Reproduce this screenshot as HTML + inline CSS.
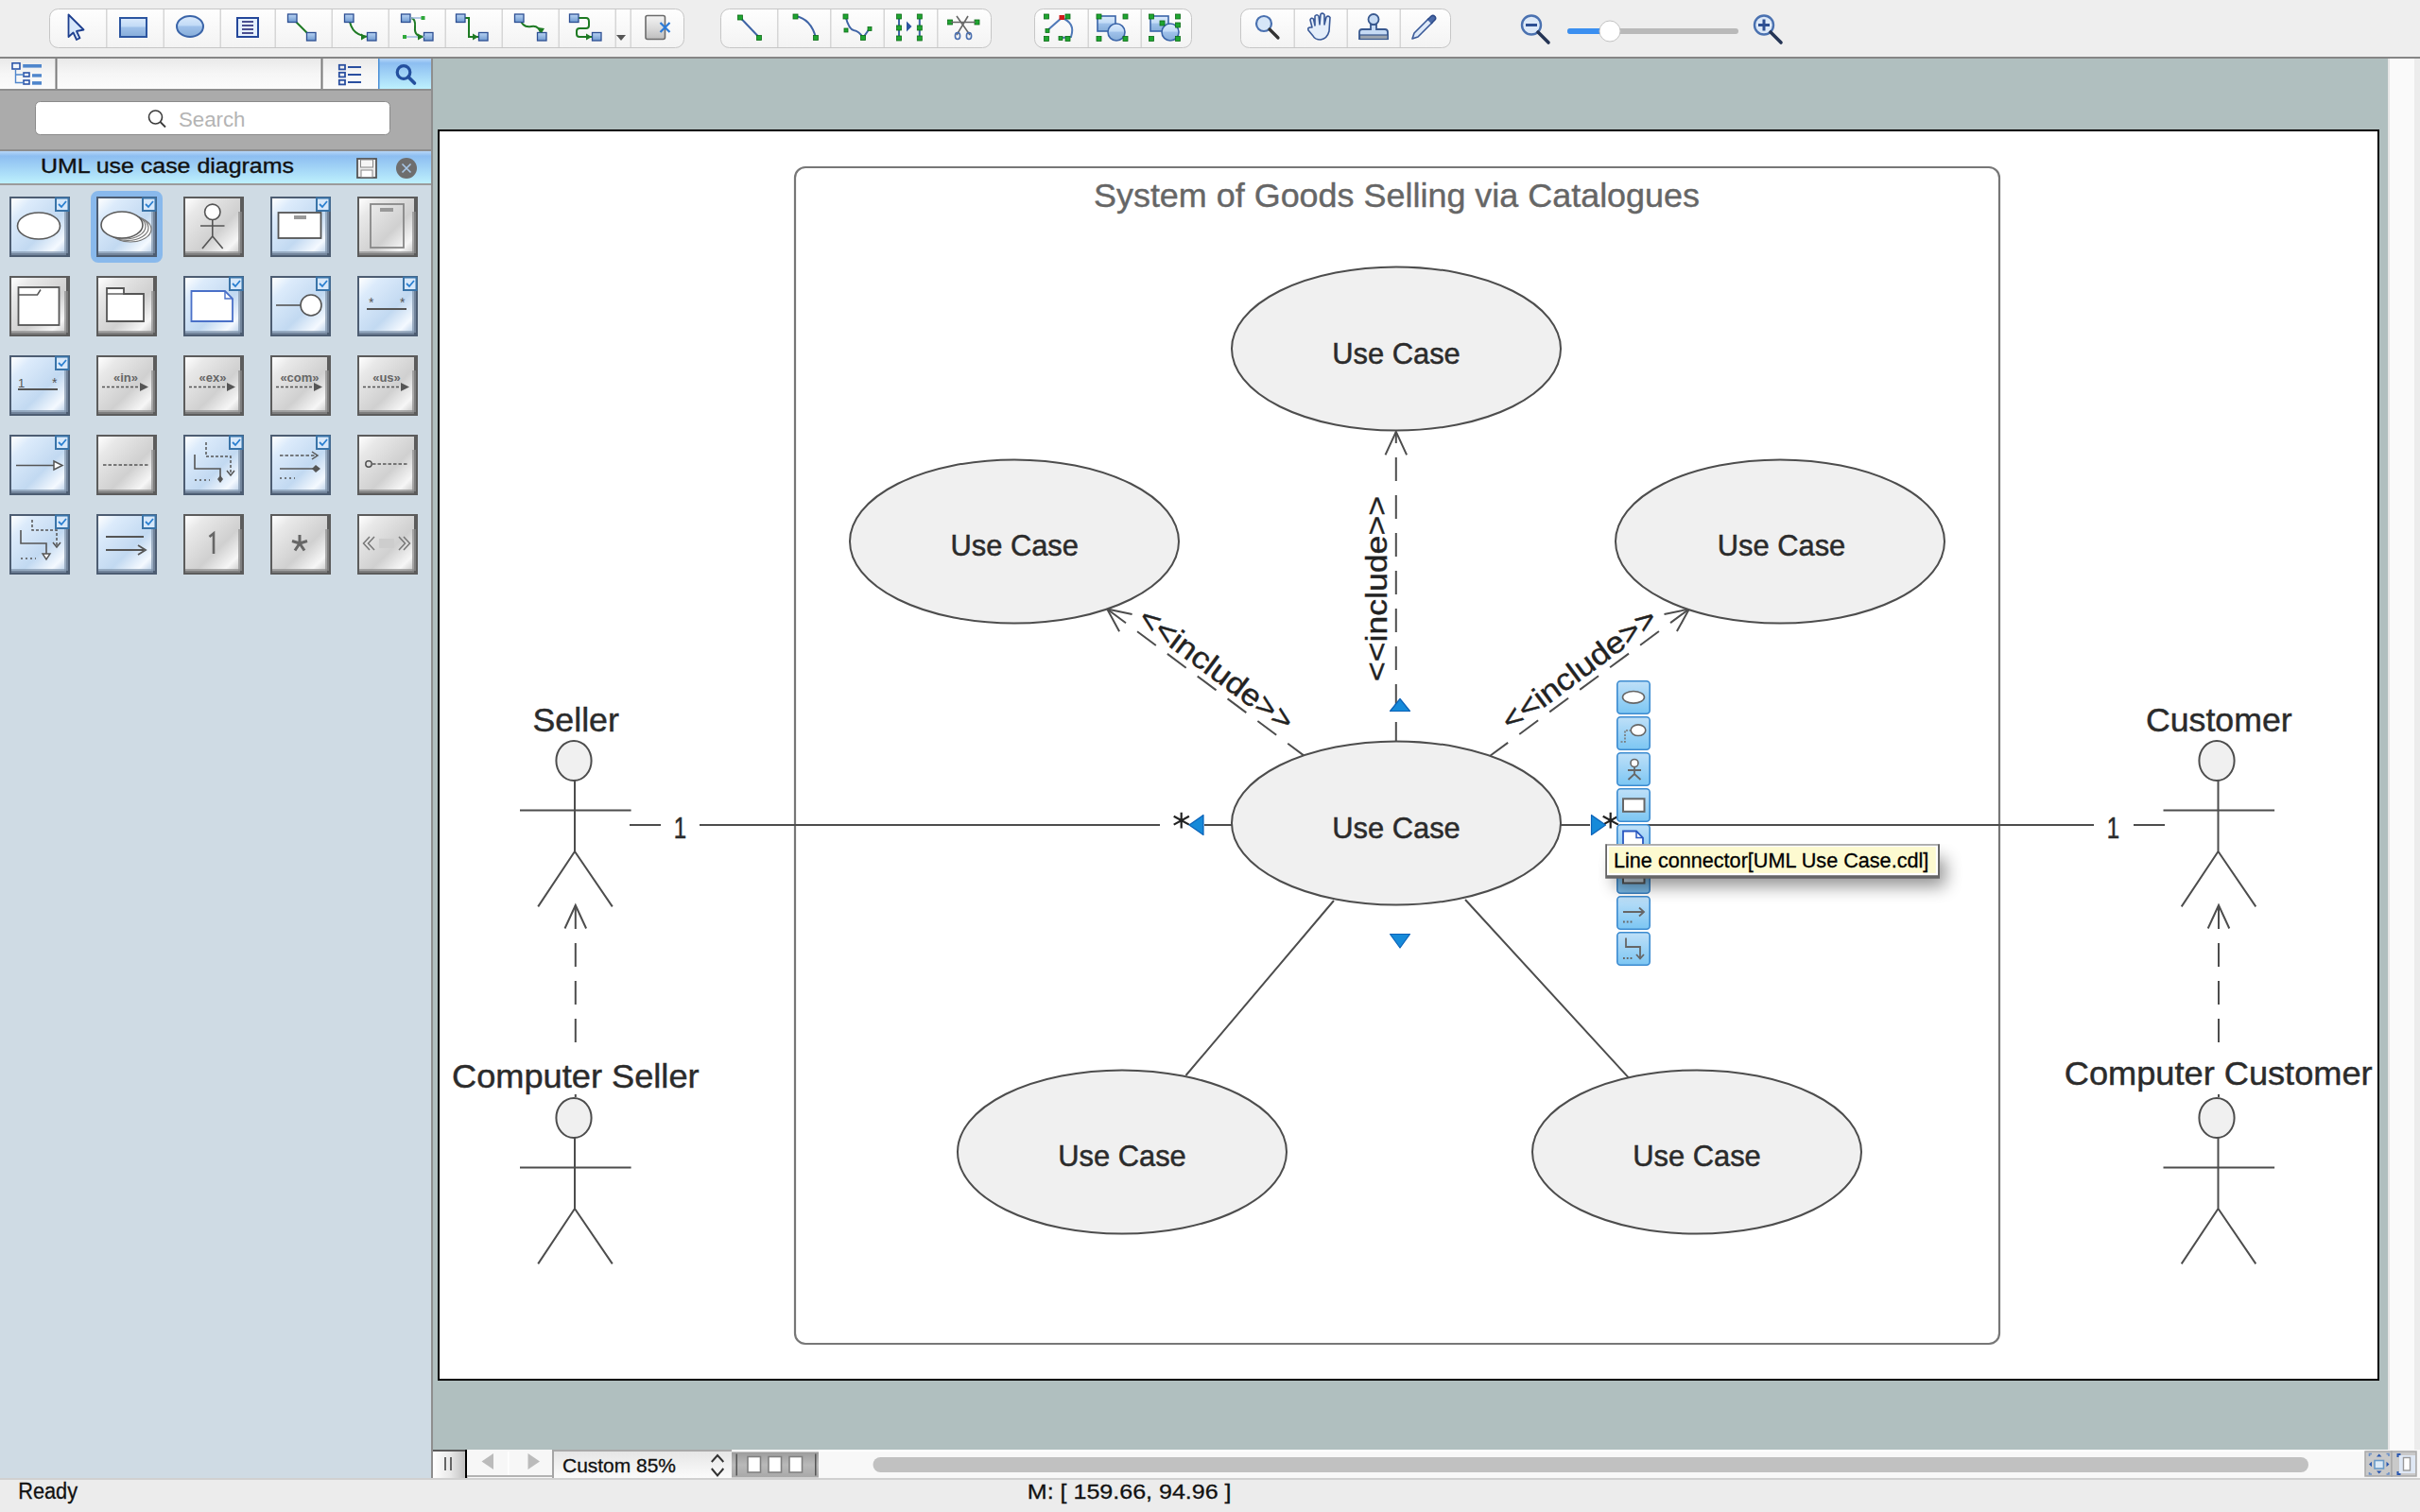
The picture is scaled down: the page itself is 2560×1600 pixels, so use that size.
<!DOCTYPE html>
<html><head><meta charset="utf-8">
<style>
*{margin:0;padding:0;box-sizing:border-box}
html,body{width:2560px;height:1600px;overflow:hidden;background:#ececec;font-family:"Liberation Sans",sans-serif}
.a{position:absolute}
svg{display:block}
</style></head>
<body>
<svg class="a" style="left:0;top:0" width="2560" height="62" viewBox="0 0 2560 62">
<defs>
<linearGradient id="gbtn" x1="0" y1="0" x2="0" y2="1"><stop offset="0" stop-color="#fefefe"/><stop offset="1" stop-color="#f3f3f3"/></linearGradient>
<linearGradient id="gblue" x1="0" y1="0" x2="0" y2="1"><stop offset="0" stop-color="#dbeafc"/><stop offset="0.45" stop-color="#c2dbf6"/><stop offset="0.5" stop-color="#9fc1ea"/><stop offset="1" stop-color="#86add9"/></linearGradient>
<linearGradient id="gsq" x1="0" y1="0" x2="0" y2="1"><stop offset="0" stop-color="#b9d3f3"/><stop offset="1" stop-color="#6f9ad0"/></linearGradient>
<linearGradient id="ggray" x1="0" y1="0" x2="0" y2="1"><stop offset="0" stop-color="#f4f4f4"/><stop offset="0.5" stop-color="#dcdcdc"/><stop offset="1" stop-color="#bdbdbd"/></linearGradient>
</defs>
<rect width="2560" height="60" fill="#eeeeee"/>
<rect y="60" width="2560" height="2" fill="#858585"/>
<g stroke="#c6c6c6" stroke-width="1" fill="url(#gbtn)">
<rect x="52.5" y="9.5" width="671" height="41" rx="9"/>
<rect x="762.5" y="9.5" width="286" height="41" rx="9"/>
<rect x="1094.5" y="9.5" width="166" height="41" rx="9"/>
<rect x="1312.5" y="9.5" width="222" height="41" rx="9"/>
</g>
<g fill="#d6d6d6">
<rect x="112" y="10" width="1.5" height="40"/><rect x="172.5" y="10" width="1.5" height="40"/><rect x="232.5" y="10" width="1.5" height="40"/><rect x="290.5" y="10" width="1.5" height="40"/><rect x="350.5" y="10" width="1.5" height="40"/><rect x="410.5" y="10" width="1.5" height="40"/><rect x="470.5" y="10" width="1.5" height="40"/><rect x="530.5" y="10" width="1.5" height="40"/><rect x="590.5" y="10" width="1.5" height="40"/><rect x="650.5" y="10" width="1.5" height="40"/><rect x="666.5" y="10" width="1.5" height="40"/>
<rect x="822" y="10" width="1.5" height="40"/><rect x="878" y="10" width="1.5" height="40"/><rect x="934.5" y="10" width="1.5" height="40"/><rect x="991" y="10" width="1.5" height="40"/>
<rect x="1150.5" y="10" width="1.5" height="40"/><rect x="1206.5" y="10" width="1.5" height="40"/>
<rect x="1368.5" y="10" width="1.5" height="40"/><rect x="1424.5" y="10" width="1.5" height="40"/><rect x="1480.5" y="10" width="1.5" height="40"/>
</g>
<!-- group1 icons -->
<path d="M72.5 15.5V39L77.5 34.5L81 42L84.5 40.3L81 33L88.5 31.5Z" fill="#d6e7fb" stroke="#1d3e8e" stroke-width="1.8" stroke-linejoin="round"/>
<rect x="127" y="19" width="28" height="20" fill="url(#gblue)" stroke="#2b55a0" stroke-width="2"/>
<ellipse cx="201" cy="28" rx="14" ry="11" fill="url(#gblue)" stroke="#3a64a8" stroke-width="2"/>
<rect x="251" y="19" width="22" height="20" fill="#e6f1fd" stroke="#24479a" stroke-width="2"/>
<path d="M256 23H268M256 27H268M256 31H268M256 35H268" stroke="#4a4f90" stroke-width="1.8"/>
<g stroke="#1e7a23" stroke-width="2" fill="none">
<path d="M309 19L329 39"/>
<path d="M369.5 19Q371 39 393 39"/>
<path d="M434 19Q440 19 439 29Q438 39 449 39"/>
<path d="M487 19H496V39H511"/>
<path d="M549.5 19Q553 30 562 28Q571 26 573 39"/>
<path d="M607.5 19H620Q623 19 623 23V27Q623 30 620 30H613Q610 30 610 33V36Q610 39 613 39H631"/>
</g>
<g fill="url(#gsq)" stroke="#2d4f93" stroke-width="1.3">
<rect x="304.5" y="15" width="9.5" height="8.5"/><rect x="324.5" y="34.5" width="9.5" height="8.5"/>
<rect x="364.5" y="15" width="9.5" height="8.5"/><rect x="388.5" y="34.5" width="9.5" height="8.5"/>
<rect x="424.5" y="15" width="9.5" height="8.5"/><rect x="448.5" y="34.5" width="9.5" height="8.5"/>
<rect x="482.5" y="15" width="9.5" height="8.5"/><rect x="506.5" y="34.5" width="9.5" height="8.5"/>
<rect x="544.5" y="15" width="9.5" height="8.5"/><rect x="568.5" y="34.5" width="9.5" height="8.5"/>
<rect x="602.5" y="15" width="9.5" height="8.5"/><rect x="626.5" y="34.5" width="9.5" height="8.5"/>
</g>
<path d="M434 19H447M428 39H449" stroke="#9db8dc" stroke-width="1.4"/><rect x="445.5" y="17" width="4" height="4" fill="#2fa83a"/><rect x="426" y="37" width="4" height="4" fill="#2fa83a"/>
<path d="M652 37H662L657 43Z" fill="#555"/>
<rect x="683" y="16.5" width="20.5" height="25" rx="2" fill="url(#ggray)" stroke="#6b6b6b" stroke-width="1.6"/>
<path d="M698.5 24L708.5 34M708.5 24L698.5 34" stroke="#2a7ad8" stroke-width="2.2"/>
<g fill="#1e7a23"><path d="M388 39L382 35.5V42.5Z"/><path d="M448 39L442 35.5V42.5Z"/><path d="M506 39L500 35.5V42.5Z"/><path d="M626 39L620 35.5V42.5Z"/><path d="M573 35L569 29L576 30Z"/></g>
<!-- group2 icons -->
<g stroke="#3f64a6" stroke-width="2" fill="none">
<path d="M783 18.5L803 39.5"/>
<path d="M841.5 17Q858 20 863 40"/>
<path d="M894.5 17.5Q898 31 903 32Q909 33 913 40M913 40L920 30"/>
<path d="M951 17V40M972.8 17V40"/>
</g>
<path d="M959 22.5L964.5 28L959 33.5Z" fill="#2c55a0"/>
<g fill="#1fa531" stroke="#0d6b17" stroke-width="0.8">
<rect x="780.5" y="16" width="5" height="5"/><rect x="800.5" y="37.5" width="5" height="5"/>
<rect x="839" y="15" width="5" height="5"/><rect x="860.5" y="37.5" width="5" height="5"/>
<rect x="892" y="15" width="5" height="5"/><rect x="910.5" y="37.5" width="5" height="5"/>
<rect x="893" y="30" width="4" height="4"/><rect x="918" y="28.5" width="4" height="4"/>
<rect x="948.5" y="15" width="5" height="5"/><rect x="948.5" y="27" width="5" height="5"/><rect x="948.5" y="38" width="5" height="5"/>
<rect x="970.3" y="15" width="5" height="5"/><rect x="970.3" y="27" width="5" height="5"/><rect x="970.3" y="38" width="5" height="5"/>
<rect x="1002.5" y="21" width="5" height="5"/><rect x="1031" y="21" width="5" height="5"/>
</g>
<path d="M1006 23.5H1032M1012 17L1026 37M1024 17L1012 37" stroke="#666" stroke-width="1.6" fill="none"/>
<ellipse cx="1013" cy="38" rx="2.6" ry="3.5" fill="none" stroke="#4a6fb0" stroke-width="1.6"/>
<ellipse cx="1025" cy="38" rx="2.6" ry="3.5" fill="none" stroke="#4a6fb0" stroke-width="1.6"/>
<!-- group3 -->
<path d="M1107 33L1123 19Q1138 24 1133 39L1124 40" fill="none" stroke="#4f79b8" stroke-width="2"/>
<rect x="1120.5" y="16" width="5.5" height="5" fill="#d21c1c"/>
<rect x="1161" y="17" width="19" height="16" fill="url(#gblue)" stroke="#3a64a8" stroke-width="1.6"/>
<circle cx="1181" cy="34" r="9" fill="url(#gblue)" stroke="#3a64a8" stroke-width="1.6"/>
<rect x="1217" y="17" width="19" height="16" fill="url(#gblue)" stroke="#3a64a8" stroke-width="1.6"/>
<circle cx="1238" cy="34" r="9" fill="url(#gblue)" stroke="#3a64a8" stroke-width="1.6"/>
<g fill="#1fa531" stroke="#0d6b17" stroke-width="0.8">
<rect x="1104.5" y="15" width="5" height="5"/><rect x="1127" y="15" width="5" height="5"/><rect x="1104.5" y="38.5" width="5" height="5"/><rect x="1127" y="38.5" width="5" height="5"/><rect x="1106" y="30.5" width="4" height="4"/><rect x="1120" y="38.5" width="4" height="4"/>
<rect x="1160" y="15" width="5" height="5"/><rect x="1188" y="15" width="5" height="5"/><rect x="1160" y="38.5" width="5" height="5"/><rect x="1188" y="38.5" width="5" height="5"/>
<rect x="1215.5" y="15" width="5" height="5"/><rect x="1243.5" y="15" width="5" height="5"/><rect x="1215.5" y="38.5" width="5" height="5"/><rect x="1243.5" y="38.5" width="5" height="5"/><rect x="1227" y="22" width="5" height="5"/><rect x="1243.5" y="24" width="5" height="5"/>
</g>
<!-- group4 -->
<circle cx="1337" cy="25" r="8" fill="#d6e6f8" stroke="#4a71b0" stroke-width="2.2"/>
<path d="M1343 31L1352 40" stroke="#333" stroke-width="3.2" stroke-linecap="round"/>
<path d="M1388 29L1386 21Q1387 18 1389.5 20L1391 27L1391 17Q1393 14.5 1395 17L1396 26L1397 15Q1399 13 1401 15.5L1401 26L1403 18Q1405 16 1407 18.5L1406 33Q1404 41 1397 42Q1391 42 1389 38L1384 32Q1383 29 1386 29Z" fill="#e4eefa" stroke="#3a5a98" stroke-width="1.6" stroke-linejoin="round"/>
<circle cx="1453" cy="20.5" r="5.5" fill="#c5daf4" stroke="#39598f" stroke-width="1.8"/>
<path d="M1450 26H1456V31H1465Q1468 31 1468 34V41H1438V34Q1438 31 1441 31H1450Z" fill="#c5daf4" stroke="#39598f" stroke-width="1.8"/>
<rect x="1438.5" y="37" width="29.5" height="4.5" fill="#9aa3ad" stroke="#39598f" stroke-width="1.2"/>
<path d="M1494 41L1496 35L1511 20L1515 24L1500 39Z" fill="#dde9f8" stroke="#3a5a98" stroke-width="1.6" stroke-linejoin="round"/>
<path d="M1510 21L1514 17Q1516 15.5 1518 17.5Q1519.5 19.5 1518 21L1514 25" fill="#4a6aa8" stroke="#2d4a88" stroke-width="1.5"/>
<!-- zoom -->
<circle cx="1620" cy="26.5" r="10" fill="#dde9f8" stroke="#4a71b0" stroke-width="2.4"/>
<path d="M1614 26.5H1626" stroke="#2d4f93" stroke-width="3"/>
<path d="M1627 34L1638 45" stroke="#253555" stroke-width="3.6" stroke-linecap="round"/>
<rect x="1658" y="30" width="181" height="6" rx="3" fill="#b9b9b9"/>
<rect x="1658" y="30" width="46" height="6" rx="3" fill="#3b8ff0"/>
<circle cx="1703" cy="33" r="11" fill="#fff" stroke="#c3c3c3" stroke-width="1"/>
<circle cx="1866" cy="26.5" r="10" fill="#dde9f8" stroke="#4a71b0" stroke-width="2.4"/>
<path d="M1860 26.5H1872M1866 20.5V32.5" stroke="#2d4f93" stroke-width="3"/>
<path d="M1873 34L1884 45" stroke="#253555" stroke-width="3.6" stroke-linecap="round"/>
</svg>

<svg class="a" style="left:0;top:62px" width="458" height="1502" viewBox="0 62 458 1502">
<defs>
<linearGradient id="ptab" x1="0" y1="0" x2="0" y2="1"><stop offset="0" stop-color="#e9e9e9"/><stop offset="0.5" stop-color="#f6f6f6"/><stop offset="1" stop-color="#fbfbfb"/></linearGradient>
<linearGradient id="pact" x1="0" y1="0" x2="0" y2="1"><stop offset="0" stop-color="#b6d6f8"/><stop offset="0.15" stop-color="#8dbef1"/><stop offset="1" stop-color="#bdf0fd"/></linearGradient>
<linearGradient id="picb" x1="0" y1="0" x2="1" y2="1"><stop offset="0" stop-color="#ffffff"/><stop offset="0.2" stop-color="#dcebfb"/><stop offset="0.6" stop-color="#c2d9f1"/><stop offset="0.85" stop-color="#f4f9ff"/><stop offset="1" stop-color="#b9cfe8"/></linearGradient>
<linearGradient id="picg" x1="0" y1="0" x2="1" y2="1"><stop offset="0" stop-color="#ffffff"/><stop offset="0.2" stop-color="#e8e8e8"/><stop offset="0.6" stop-color="#d0d0d0"/><stop offset="0.85" stop-color="#f6f6f6"/><stop offset="1" stop-color="#c8c8c8"/></linearGradient>
</defs>
<rect x="0" y="62" width="456" height="32" fill="url(#ptab)"/>
<rect x="400" y="62" width="56" height="32" fill="url(#pact)"/><rect x="400" y="62" width="1.5" height="32" fill="#4b8fd6"/>
<rect x="58.5" y="62" width="2" height="32" fill="#7b7b7b"/><rect x="339.5" y="62" width="2" height="32" fill="#7b7b7b"/>
<g fill="#5a8fd0" stroke="#2c55a8" stroke-width="1.6"><rect x="13" y="66.8" width="8" height="6.2" fill="#f2f6fc"/><rect x="25" y="77" width="6" height="4" fill="#f2f6fc"/><rect x="25" y="85" width="6" height="4" fill="#f2f6fc"/></g>
<g fill="#4f86cc"><rect x="24.2" y="68" width="19.8" height="3.6"/><rect x="34" y="78.2" width="10" height="3.4"/><rect x="34" y="86.1" width="10" height="3.6"/></g>
<path d="M16.5 73.6V87.5H25M16.5 79H25" stroke="#4f86cc" stroke-width="1.4" fill="none"/>
<g fill="none" stroke="#2a4fa0" stroke-width="1.8"><rect x="358.8" y="68.8" width="6.2" height="4.6"/><rect x="358.8" y="76.8" width="6.2" height="4.6"/><rect x="358.8" y="84.8" width="6.2" height="4.6"/><path d="M368 71H382M368 79H382M368 87H382"/></g>
<circle cx="427" cy="76.5" r="6.8" fill="none" stroke="#24509e" stroke-width="3.2"/><path d="M432 81.5L438.5 88" stroke="#24509e" stroke-width="3.6" stroke-linecap="round"/>
<rect x="0" y="94" width="456" height="2" fill="#8e8e8e"/>
<rect x="0" y="96" width="456" height="62" fill="#ababab"/>
<rect x="37.5" y="107.5" width="375" height="35" rx="5" fill="#fff" stroke="#8a8a8a" stroke-width="1"/>
<circle cx="164.5" cy="124" r="7" fill="none" stroke="#3a3a3a" stroke-width="1.6"/><path d="M169.5 129L175 134.5" stroke="#3a3a3a" stroke-width="1.8"/>
<text x="189" y="134" font-family="Liberation Sans" font-size="21.5" fill="#b4b4b4" textLength="70.5" lengthAdjust="spacingAndGlyphs">Search</text>
<rect x="0" y="158" width="456" height="2" fill="#8e8e8e"/>
<rect x="0" y="160" width="456" height="34" fill="url(#pact)"/>
<text x="43" y="183" font-family="Liberation Sans" font-size="21.5" fill="#111" stroke="#111" stroke-width="0.35" textLength="268" lengthAdjust="spacingAndGlyphs">UML use case diagrams</text>
<rect x="378" y="168" width="20" height="20" fill="#ececec" stroke="#555" stroke-width="1.8"/><rect x="381.5" y="169" width="13" height="8" fill="#f6f6f6" stroke="#888" stroke-width="1"/><rect x="382" y="180" width="12" height="7.5" fill="#fff" stroke="#888" stroke-width="1"/>
<circle cx="430" cy="178" r="11" fill="#6e6e6e"/><path d="M425.5 173.5L434.5 182.5M434.5 173.5L425.5 182.5" stroke="#a9c8e8" stroke-width="1.6"/>
<rect x="0" y="194" width="456" height="2" fill="#9b9b9b"/>
<rect x="0" y="196" width="456" height="1368" fill="#cfdbe4"/>
<rect x="99" y="205" width="70" height="70" rx="5" fill="none" stroke="#89b9ec" stroke-width="6"/>
<g transform="translate(10 208)">
<rect x="0" y="0" width="64" height="64" fill="#4d5d72"/>
<rect x="2" y="2" width="58" height="58" fill="url(#picb)"/>
<rect x="2" y="58" width="58" height="4" fill="#8296ad" opacity="0.7"/><rect x="58" y="16" width="4" height="44" fill="#8296ad" opacity="0.7"/>
<ellipse cx="31" cy="31" rx="22.5" ry="14" fill="#fff" stroke="#5a5a5a" stroke-width="1.6"/>
<rect x="49" y="1.5" width="13.5" height="13.5" fill="#d7e8fa" stroke="#3a74a8" stroke-width="2"/><path d="M52 8L55 11L60 5" fill="none" stroke="#2a7fd0" stroke-width="1.8"/>
</g>
<g transform="translate(102 208)">
<rect x="0" y="0" width="64" height="64" fill="#4d5d72"/>
<rect x="2" y="2" width="58" height="58" fill="url(#picb)"/>
<rect x="2" y="58" width="58" height="4" fill="#8296ad" opacity="0.7"/><rect x="58" y="16" width="4" height="44" fill="#8296ad" opacity="0.7"/>
<ellipse cx="36" cy="34.5" rx="22" ry="13.5" fill="#fff" stroke="#777" stroke-width="1.2"/><ellipse cx="33" cy="33" rx="22" ry="13.5" fill="#fff" stroke="#777" stroke-width="1.2"/><ellipse cx="30" cy="31.5" rx="22" ry="13.5" fill="#fff" stroke="#777" stroke-width="1.2"/><ellipse cx="27" cy="30" rx="22" ry="14" fill="#fff" stroke="#5a5a5a" stroke-width="1.6"/>
<rect x="49" y="1.5" width="13.5" height="13.5" fill="#d7e8fa" stroke="#3a74a8" stroke-width="2"/><path d="M52 8L55 11L60 5" fill="none" stroke="#2a7fd0" stroke-width="1.8"/>
</g>
<g transform="translate(194 208)">
<rect x="0" y="0" width="64" height="64" fill="#5c5c5c"/>
<rect x="2" y="2" width="58" height="58" fill="url(#picg)"/>
<rect x="2" y="58" width="58" height="4" fill="#8d8d8d" opacity="0.7"/><rect x="58" y="16" width="4" height="44" fill="#8d8d8d" opacity="0.7"/>
<circle cx="30.8" cy="16.3" r="8.2" fill="#fff" stroke="#555" stroke-width="1.6"/><path d="M30.8 24.5V42M18 31H43.5M20 55L30.8 42L41.7 55" fill="none" stroke="#555" stroke-width="1.6"/>
</g>
<g transform="translate(286 208)">
<rect x="0" y="0" width="64" height="64" fill="#4d5d72"/>
<rect x="2" y="2" width="58" height="58" fill="url(#picb)"/>
<rect x="2" y="58" width="58" height="4" fill="#8296ad" opacity="0.7"/><rect x="58" y="16" width="4" height="44" fill="#8296ad" opacity="0.7"/>
<rect x="8.5" y="17" width="45" height="27" fill="#fff" stroke="#555" stroke-width="1.8"/><rect x="25" y="20" width="13" height="4" fill="#999"/>
<rect x="49" y="1.5" width="13.5" height="13.5" fill="#d7e8fa" stroke="#3a74a8" stroke-width="2"/><path d="M52 8L55 11L60 5" fill="none" stroke="#2a7fd0" stroke-width="1.8"/>
</g>
<g transform="translate(378 208)">
<rect x="0" y="0" width="64" height="64" fill="#5c5c5c"/>
<rect x="2" y="2" width="58" height="58" fill="url(#picg)"/>
<rect x="2" y="58" width="58" height="4" fill="#8d8d8d" opacity="0.7"/><rect x="58" y="16" width="4" height="44" fill="#8d8d8d" opacity="0.7"/>
<rect x="14" y="8" width="35" height="46" fill="none" stroke="#888" stroke-width="1.8"/><rect x="24" y="12" width="14" height="4" fill="#999"/>
</g>
<g transform="translate(10 292)">
<rect x="0" y="0" width="64" height="64" fill="#5c5c5c"/>
<rect x="2" y="2" width="58" height="58" fill="url(#picg)"/>
<rect x="2" y="58" width="58" height="4" fill="#8d8d8d" opacity="0.7"/><rect x="58" y="16" width="4" height="44" fill="#8d8d8d" opacity="0.7"/>
<rect x="9.5" y="12" width="43" height="40" fill="#fff" stroke="#555" stroke-width="1.8"/><path d="M9.5 20H29.5L33 14.5" fill="none" stroke="#555" stroke-width="1.5"/>
</g>
<g transform="translate(102 292)">
<rect x="0" y="0" width="64" height="64" fill="#5c5c5c"/>
<rect x="2" y="2" width="58" height="58" fill="url(#picg)"/>
<rect x="2" y="58" width="58" height="4" fill="#8d8d8d" opacity="0.7"/><rect x="58" y="16" width="4" height="44" fill="#8d8d8d" opacity="0.7"/>
<path d="M11 13H29V19H50V48H11Z" fill="#fff" stroke="#555" stroke-width="1.8"/><path d="M11 19H29" stroke="#555" stroke-width="1.4"/>
</g>
<g transform="translate(194 292)">
<rect x="0" y="0" width="64" height="64" fill="#4d5d72"/>
<rect x="2" y="2" width="58" height="58" fill="url(#picb)"/>
<rect x="2" y="58" width="58" height="4" fill="#8296ad" opacity="0.7"/><rect x="58" y="16" width="4" height="44" fill="#8296ad" opacity="0.7"/>
<path d="M8.5 16H44L52 24V48H8.5Z" fill="#fff" stroke="#4a70c8" stroke-width="1.8"/><path d="M44 16V24H52" fill="none" stroke="#4a70c8" stroke-width="1.4"/>
<rect x="49" y="1.5" width="13.5" height="13.5" fill="#d7e8fa" stroke="#3a74a8" stroke-width="2"/><path d="M52 8L55 11L60 5" fill="none" stroke="#2a7fd0" stroke-width="1.8"/>
</g>
<g transform="translate(286 292)">
<rect x="0" y="0" width="64" height="64" fill="#4d5d72"/>
<rect x="2" y="2" width="58" height="58" fill="url(#picb)"/>
<rect x="2" y="58" width="58" height="4" fill="#8296ad" opacity="0.7"/><rect x="58" y="16" width="4" height="44" fill="#8296ad" opacity="0.7"/>
<path d="M6 31H33" stroke="#555" stroke-width="1.6"/><circle cx="43" cy="31" r="11" fill="#fff" stroke="#555" stroke-width="1.6"/>
<rect x="49" y="1.5" width="13.5" height="13.5" fill="#d7e8fa" stroke="#3a74a8" stroke-width="2"/><path d="M52 8L55 11L60 5" fill="none" stroke="#2a7fd0" stroke-width="1.8"/>
</g>
<g transform="translate(378 292)">
<rect x="0" y="0" width="64" height="64" fill="#4d5d72"/>
<rect x="2" y="2" width="58" height="58" fill="url(#picb)"/>
<rect x="2" y="58" width="58" height="4" fill="#8296ad" opacity="0.7"/><rect x="58" y="16" width="4" height="44" fill="#8296ad" opacity="0.7"/>
<path d="M10 35H52" stroke="#555" stroke-width="1.8"/><text x="12" y="33" font-family="Liberation Sans" font-size="14" fill="#555">*</text><text x="45" y="33" font-family="Liberation Sans" font-size="14" fill="#555">*</text>
<rect x="49" y="1.5" width="13.5" height="13.5" fill="#d7e8fa" stroke="#3a74a8" stroke-width="2"/><path d="M52 8L55 11L60 5" fill="none" stroke="#2a7fd0" stroke-width="1.8"/>
</g>
<g transform="translate(10 376)">
<rect x="0" y="0" width="64" height="64" fill="#4d5d72"/>
<rect x="2" y="2" width="58" height="58" fill="url(#picb)"/>
<rect x="2" y="58" width="58" height="4" fill="#8296ad" opacity="0.7"/><rect x="58" y="16" width="4" height="44" fill="#8296ad" opacity="0.7"/>
<path d="M9 36H51" stroke="#555" stroke-width="1.8"/><text x="9" y="34" font-family="Liberation Sans" font-size="13" fill="#555">1</text><text x="45" y="34" font-family="Liberation Sans" font-size="14" fill="#555">*</text>
<rect x="49" y="1.5" width="13.5" height="13.5" fill="#d7e8fa" stroke="#3a74a8" stroke-width="2"/><path d="M52 8L55 11L60 5" fill="none" stroke="#2a7fd0" stroke-width="1.8"/>
</g>
<g transform="translate(102 376)">
<rect x="0" y="0" width="64" height="64" fill="#5c5c5c"/>
<rect x="2" y="2" width="58" height="58" fill="url(#picg)"/>
<rect x="2" y="58" width="58" height="4" fill="#8d8d8d" opacity="0.7"/><rect x="58" y="16" width="4" height="44" fill="#8d8d8d" opacity="0.7"/>
<text x="31" y="28" font-family="Liberation Sans" font-size="13" font-weight="bold" fill="#666" text-anchor="middle">«in»</text><path d="M6 33.5H48" stroke="#555" stroke-width="1.6" stroke-dasharray="3 2"/><path d="M46 29L55 33.5L46 38Z" fill="#555"/>
</g>
<g transform="translate(194 376)">
<rect x="0" y="0" width="64" height="64" fill="#5c5c5c"/>
<rect x="2" y="2" width="58" height="58" fill="url(#picg)"/>
<rect x="2" y="58" width="58" height="4" fill="#8d8d8d" opacity="0.7"/><rect x="58" y="16" width="4" height="44" fill="#8d8d8d" opacity="0.7"/>
<text x="31" y="28" font-family="Liberation Sans" font-size="13" font-weight="bold" fill="#666" text-anchor="middle">«ex»</text><path d="M6 33.5H48" stroke="#555" stroke-width="1.6" stroke-dasharray="3 2"/><path d="M46 29L55 33.5L46 38Z" fill="#555"/>
</g>
<g transform="translate(286 376)">
<rect x="0" y="0" width="64" height="64" fill="#5c5c5c"/>
<rect x="2" y="2" width="58" height="58" fill="url(#picg)"/>
<rect x="2" y="58" width="58" height="4" fill="#8d8d8d" opacity="0.7"/><rect x="58" y="16" width="4" height="44" fill="#8d8d8d" opacity="0.7"/>
<text x="31" y="28" font-family="Liberation Sans" font-size="13" font-weight="bold" fill="#666" text-anchor="middle">«com»</text><path d="M6 33.5H48" stroke="#555" stroke-width="1.6" stroke-dasharray="3 2"/><path d="M46 29L55 33.5L46 38Z" fill="#555"/>
</g>
<g transform="translate(378 376)">
<rect x="0" y="0" width="64" height="64" fill="#5c5c5c"/>
<rect x="2" y="2" width="58" height="58" fill="url(#picg)"/>
<rect x="2" y="58" width="58" height="4" fill="#8d8d8d" opacity="0.7"/><rect x="58" y="16" width="4" height="44" fill="#8d8d8d" opacity="0.7"/>
<text x="31" y="28" font-family="Liberation Sans" font-size="13" font-weight="bold" fill="#666" text-anchor="middle">«us»</text><path d="M6 33.5H48" stroke="#555" stroke-width="1.6" stroke-dasharray="3 2"/><path d="M46 29L55 33.5L46 38Z" fill="#555"/>
</g>
<g transform="translate(10 460)">
<rect x="0" y="0" width="64" height="64" fill="#4d5d72"/>
<rect x="2" y="2" width="58" height="58" fill="url(#picb)"/>
<rect x="2" y="58" width="58" height="4" fill="#8296ad" opacity="0.7"/><rect x="58" y="16" width="4" height="44" fill="#8296ad" opacity="0.7"/>
<path d="M7 32.5H47" stroke="#555" stroke-width="1.6"/><path d="M47 28L56 32.5L47 37Z" fill="#fff" stroke="#555" stroke-width="1.5"/>
<rect x="49" y="1.5" width="13.5" height="13.5" fill="#d7e8fa" stroke="#3a74a8" stroke-width="2"/><path d="M52 8L55 11L60 5" fill="none" stroke="#2a7fd0" stroke-width="1.8"/>
</g>
<g transform="translate(102 460)">
<rect x="0" y="0" width="64" height="64" fill="#5c5c5c"/>
<rect x="2" y="2" width="58" height="58" fill="url(#picg)"/>
<rect x="2" y="58" width="58" height="4" fill="#8d8d8d" opacity="0.7"/><rect x="58" y="16" width="4" height="44" fill="#8d8d8d" opacity="0.7"/>
<path d="M7 32H56" stroke="#555" stroke-width="1.6" stroke-dasharray="3.5 2"/>
</g>
<g transform="translate(194 460)">
<rect x="0" y="0" width="64" height="64" fill="#4d5d72"/>
<rect x="2" y="2" width="58" height="58" fill="url(#picb)"/>
<rect x="2" y="58" width="58" height="4" fill="#8296ad" opacity="0.7"/><rect x="58" y="16" width="4" height="44" fill="#8296ad" opacity="0.7"/>
<path d="M24 8V23H50V41" stroke="#555" stroke-width="1.5" fill="none" stroke-dasharray="3 2"/><path d="M46 38L50 43L54 38" stroke="#555" stroke-width="1.5" fill="none"/><path d="M12 21V36H39V47" stroke="#555" stroke-width="1.6" fill="none"/><path d="M36 47L39 43L42 47L39 51Z" fill="#555"/><path d="M12 48H28" stroke="#555" stroke-width="1.6" stroke-dasharray="2 3"/>
<rect x="49" y="1.5" width="13.5" height="13.5" fill="#d7e8fa" stroke="#3a74a8" stroke-width="2"/><path d="M52 8L55 11L60 5" fill="none" stroke="#2a7fd0" stroke-width="1.8"/>
</g>
<g transform="translate(286 460)">
<rect x="0" y="0" width="64" height="64" fill="#4d5d72"/>
<rect x="2" y="2" width="58" height="58" fill="url(#picb)"/>
<rect x="2" y="58" width="58" height="4" fill="#8296ad" opacity="0.7"/><rect x="58" y="16" width="4" height="44" fill="#8296ad" opacity="0.7"/>
<path d="M10 22H50" stroke="#555" stroke-width="1.6" stroke-dasharray="3.5 2"/><path d="M44 18L50 22L44 26" fill="none" stroke="#555" stroke-width="1.5"/><path d="M10 36H46" stroke="#555" stroke-width="1.6"/><path d="M44 36L48 32L53 36L48 40Z" fill="#555"/><path d="M10 46H26" stroke="#555" stroke-width="1.6" stroke-dasharray="2 3"/>
<rect x="49" y="1.5" width="13.5" height="13.5" fill="#d7e8fa" stroke="#3a74a8" stroke-width="2"/><path d="M52 8L55 11L60 5" fill="none" stroke="#2a7fd0" stroke-width="1.8"/>
</g>
<g transform="translate(378 460)">
<rect x="0" y="0" width="64" height="64" fill="#5c5c5c"/>
<rect x="2" y="2" width="58" height="58" fill="url(#picg)"/>
<rect x="2" y="58" width="58" height="4" fill="#8d8d8d" opacity="0.7"/><rect x="58" y="16" width="4" height="44" fill="#8d8d8d" opacity="0.7"/>
<circle cx="12" cy="31" r="3.2" fill="none" stroke="#555" stroke-width="1.5"/><path d="M16 31H54" stroke="#555" stroke-width="1.6" stroke-dasharray="3.5 2"/>
</g>
<g transform="translate(10 544)">
<rect x="0" y="0" width="64" height="64" fill="#4d5d72"/>
<rect x="2" y="2" width="58" height="58" fill="url(#picb)"/>
<rect x="2" y="58" width="58" height="4" fill="#8296ad" opacity="0.7"/><rect x="58" y="16" width="4" height="44" fill="#8296ad" opacity="0.7"/>
<path d="M24 6V17H50V33" stroke="#555" stroke-width="1.5" fill="none" stroke-dasharray="3 2"/><path d="M46 30L50 35L54 30" stroke="#555" stroke-width="1.5" fill="none"/><path d="M12 17V31H39V42" stroke="#555" stroke-width="1.6" fill="none"/><path d="M35 42H43L39 48Z" fill="#fff" stroke="#555" stroke-width="1.4"/><path d="M12 47H28" stroke="#555" stroke-width="1.6" stroke-dasharray="2 3"/>
<rect x="49" y="1.5" width="13.5" height="13.5" fill="#d7e8fa" stroke="#3a74a8" stroke-width="2"/><path d="M52 8L55 11L60 5" fill="none" stroke="#2a7fd0" stroke-width="1.8"/>
</g>
<g transform="translate(102 544)">
<rect x="0" y="0" width="64" height="64" fill="#4d5d72"/>
<rect x="2" y="2" width="58" height="58" fill="url(#picb)"/>
<rect x="2" y="58" width="58" height="4" fill="#8296ad" opacity="0.7"/><rect x="58" y="16" width="4" height="44" fill="#8296ad" opacity="0.7"/>
<path d="M10 24H50M10 38H50" stroke="#555" stroke-width="1.8"/><path d="M44 33L52 38L44 43" fill="none" stroke="#555" stroke-width="1.8"/>
<rect x="49" y="1.5" width="13.5" height="13.5" fill="#d7e8fa" stroke="#3a74a8" stroke-width="2"/><path d="M52 8L55 11L60 5" fill="none" stroke="#2a7fd0" stroke-width="1.8"/>
</g>
<g transform="translate(194 544)">
<rect x="0" y="0" width="64" height="64" fill="#5c5c5c"/>
<rect x="2" y="2" width="58" height="58" fill="url(#picg)"/>
<rect x="2" y="58" width="58" height="4" fill="#8d8d8d" opacity="0.7"/><rect x="58" y="16" width="4" height="44" fill="#8d8d8d" opacity="0.7"/>
<path d="M27.5 24L32 20.5V42" fill="none" stroke="#666" stroke-width="2.6"/>
</g>
<g transform="translate(286 544)">
<rect x="0" y="0" width="64" height="64" fill="#5c5c5c"/>
<rect x="2" y="2" width="58" height="58" fill="url(#picg)"/>
<rect x="2" y="58" width="58" height="4" fill="#8d8d8d" opacity="0.7"/><rect x="58" y="16" width="4" height="44" fill="#8d8d8d" opacity="0.7"/>
<path d="M31 22V31M31 31L23 28.5M31 31L39 28.5M31 31L26 38.5M31 31L36 38.5" stroke="#666" stroke-width="3"/>
</g>
<g transform="translate(378 544)">
<rect x="0" y="0" width="64" height="64" fill="#5c5c5c"/>
<rect x="2" y="2" width="58" height="58" fill="url(#picg)"/>
<rect x="2" y="58" width="58" height="4" fill="#8d8d8d" opacity="0.7"/><rect x="58" y="16" width="4" height="44" fill="#8d8d8d" opacity="0.7"/>
<path d="M13 24L6.5 31L13 38M18 24L11.5 31L18 38M44 24L50.5 31L44 38M49 24L55.5 31L49 38" fill="none" stroke="#777" stroke-width="1.5"/><rect x="23" y="26" width="16" height="10" fill="#cdcdcd"/>
</g>
<rect x="456" y="62" width="2" height="1502" fill="#8e8e8e"/>
</svg>
<div class="a" style="left:458px;top:62px;width:2068px;height:1472px;background:#b0bfbf"></div>
<div class="a" style="left:463px;top:137px;width:2054px;height:1324px;background:#fff;border:2px solid #000"></div>
<svg class="a" style="left:0;top:0" width="2560" height="1600" viewBox="0 0 2560 1600">
<rect x="841" y="177" width="1274" height="1245" rx="11" ry="11" fill="none" stroke="#777" stroke-width="2.2"/>
<text x="1477.5" y="218.5" font-family="Liberation Sans" font-size="35.2" fill="#666" stroke="#666" stroke-width="0.4" text-anchor="middle" textLength="641" lengthAdjust="spacingAndGlyphs">System of Goods Selling via Catalogues</text>
<g stroke="#4d4d4d" stroke-width="2" fill="none">
<path d="M666 873H699M740 873H1227M1274 873H1303M1651 873H1682M1713 873H2215M2257 873H2290"/>
<path d="M1411 953L1254.5 1138M1550 952L1723 1140.6"/>
<path d="M1476.8 456.9L1476.8 785.2" stroke-dasharray="12 15 25 15 25 15 25 15 25 15 25 15 25 15 25 15 25 15"/>
<path d="M1171.2 644.5L1380.8 800.6M1786.9 644.5L1575.2 800.6" stroke-dasharray="24.7 15"/>
<path d="M608.8 958V1161M2347 958V1161" stroke-dasharray="25 15"/>
<path d="M1184.1 668.2L1171.2 644.5L1197.6 650.1 M1760.5 649.9L1786.9 644.5L1773.9 668.1 M1465.5 481.4L1476.8 456.9L1488.1 481.4 M597.5 982.5L608.8 958L620.1 982.5 M2335.7 982.5L2347 958L2358.3 982.5"/>
</g>
<g fill="#f0f0f0" stroke="#4d4d4d" stroke-width="2">
<ellipse cx="1477" cy="369" rx="174" ry="86.6"/>
<ellipse cx="1073" cy="573" rx="174" ry="86.6"/>
<ellipse cx="1883" cy="573" rx="174" ry="86.6"/>
<ellipse cx="1477" cy="871" rx="174" ry="86.6"/>
<ellipse cx="1187" cy="1219" rx="174" ry="86.6"/>
<ellipse cx="1795" cy="1219" rx="174" ry="86.6"/>
</g>
<g font-family="Liberation Sans" font-size="32" fill="#2b2b2b" stroke="#2b2b2b" stroke-width="0.5" text-anchor="middle">
<text x="1477" y="385.3" textLength="135.5" lengthAdjust="spacingAndGlyphs">Use Case</text>
<text x="1073.2" y="587.7" textLength="135.5" lengthAdjust="spacingAndGlyphs">Use Case</text>
<text x="1884.5" y="587.7" textLength="135.5" lengthAdjust="spacingAndGlyphs">Use Case</text>
<text x="1477" y="886.8" textLength="135.5" lengthAdjust="spacingAndGlyphs">Use Case</text>
<text x="1187" y="1234" textLength="135.5" lengthAdjust="spacingAndGlyphs">Use Case</text>
<text x="1795" y="1234" textLength="135.5" lengthAdjust="spacingAndGlyphs">Use Case</text>
<text x="719.5" y="886.5" textLength="13.4" lengthAdjust="spacingAndGlyphs">1</text>
<text x="2235.5" y="886.5" textLength="13.4" lengthAdjust="spacingAndGlyphs">1</text>
</g>
<g font-family="Liberation Sans" font-size="32" fill="#222" stroke="#222" stroke-width="0.4" text-anchor="middle">
<text transform="translate(1280.3 716.8) rotate(36.68)" textLength="195" lengthAdjust="spacingAndGlyphs">&lt;&lt;include&gt;&gt;</text>
<text transform="translate(1676.8 716.8) rotate(-36.4)" textLength="195" lengthAdjust="spacingAndGlyphs">&lt;&lt;include&gt;&gt;</text>
<text transform="translate(1467 623) rotate(-90)" textLength="196" lengthAdjust="spacingAndGlyphs">&lt;&lt;include&gt;&gt;</text>
</g>
<g fill="none" stroke="#4d4d4d" stroke-width="2">
<ellipse cx="607" cy="805" rx="18.6" ry="21.1" fill="#f0f0f0"/>
<path d="M608 826V901M550 857.6H667.6M569.2 959.4L608 901L647.8 959.4"/>
<ellipse cx="607" cy="1183" rx="18.6" ry="21.1" fill="#f0f0f0"/>
<path d="M608 1204V1279M550 1235.6H667.6M569.2 1337.4L608 1279L647.8 1337.4"/>
<ellipse cx="2345" cy="805" rx="18.6" ry="21.1" fill="#f0f0f0"/>
<path d="M2346.5 826V901M2288.5 857.6H2406.1M2307.7 959.4L2346.5 901L2386.3 959.4"/>
<ellipse cx="2345" cy="1183" rx="18.6" ry="21.1" fill="#f0f0f0"/>
<path d="M2346.5 1204V1279M2288.5 1235.6H2406.1M2307.7 1337.4L2346.5 1279L2386.3 1337.4"/>
</g>
<g font-family="Liberation Sans" font-size="35.5" fill="#2b2b2b" stroke="#2b2b2b" stroke-width="0.45" text-anchor="middle">
<rect x="470" y="1118" width="280" height="40" fill="#fff" stroke="none"/>
<rect x="2176" y="1116" width="339" height="40" fill="#fff" stroke="none"/>
<text x="609.2" y="773.7" textLength="91.3" lengthAdjust="spacingAndGlyphs">Seller</text>
<text x="2347.3" y="773.7" textLength="154.7" lengthAdjust="spacingAndGlyphs">Customer</text>
<text x="608.8" y="1150.8" textLength="261.6" lengthAdjust="spacingAndGlyphs">Computer Seller</text>
<text x="2346.7" y="1147.5" textLength="325.9" lengthAdjust="spacingAndGlyphs">Computer Customer</text>
</g>
<g stroke="#222" stroke-width="2.2" fill="none">
<path d="M1249.7 859.8V876.6M1241.7 863.7L1257.9 872.6M1241.7 872.6L1257.9 863.7"/>
<path d="M1703.7 859.8V876.6M1695.7 863.7L1711.9 872.6M1695.7 872.6L1711.9 863.7"/>
</g>
<g fill="#168ad9" stroke="#0a62b8" stroke-width="1.2" stroke-linejoin="round">
<path d="M1481 739.5L1491.5 752.5H1470.5Z"/><path d="M1481 1003L1491.5 988.5H1470.5Z"/><path d="M1258 873L1273 862.5V883.5Z"/><path d="M1698.5 873L1683.5 862.5V883.5Z"/>
</g>
</svg>
<svg class="a" style="left:1690px;top:700px" width="400" height="340" viewBox="1690 700 400 340">
<defs>
<linearGradient id="palg" x1="0" y1="0" x2="0" y2="1"><stop offset="0" stop-color="#bfe0f8"/><stop offset="1" stop-color="#7cc6f3"/></linearGradient>
<filter id="tshadow" x="-20%" y="-50%" width="140%" height="250%"><feGaussianBlur stdDeviation="9"/></filter>
</defs>
<g fill="url(#palg)" stroke="#3c8bd0" stroke-width="1.6">
<rect x="1710.8" y="720.8" width="34.4" height="34.4" rx="3.5"/>
<rect x="1710.8" y="758.8" width="34.4" height="34.4" rx="3.5"/>
<rect x="1710.8" y="796.8" width="34.4" height="34.4" rx="3.5"/>
<rect x="1710.8" y="834.8" width="34.4" height="34.4" rx="3.5"/>
<rect x="1710.8" y="872.8" width="34.4" height="34.4" rx="3.5"/>
<rect x="1710.8" y="910.8" width="34.4" height="34.4" rx="3.5" fill="#78b6e2" stroke="#3a80c0"/>
<rect x="1710.8" y="948.8" width="34.4" height="34.4" rx="3.5"/>
<rect x="1710.8" y="986.8" width="34.4" height="34.4" rx="3.5"/>
</g>
<g stroke="#666" stroke-width="1.6" fill="#fff">
<ellipse cx="1728" cy="737.8" rx="11.5" ry="6.3"/>
<ellipse cx="1733" cy="772.7" rx="7.8" ry="5.8"/>
<path d="M1714.5 785H1719V773H1725" fill="none" stroke="#777" stroke-width="1.6" stroke-dasharray="2 1.5"/>
<circle cx="1729" cy="807.5" r="4"/>
<path d="M1729 811.5V819M1722 815H1736M1722.5 825L1729 819L1735.5 825" fill="none" stroke-width="1.8"/>
<rect x="1717" y="845.3" width="22.5" height="13.5" stroke-width="2"/>
<path d="M1717 879.5H1731L1738 886.5V899H1717Z" stroke="#2a58c0" fill="#fff" stroke-width="1.8" stroke-linejoin="miter"/><path d="M1731 879.5V886.5H1738" stroke="#2a58c0" fill="none" stroke-width="1.5"/>
<rect x="1717" y="921" width="22.5" height="13.5" stroke-width="2" stroke="#555" fill="#c9d8e3"/>
<path d="M1717 965H1739M1734 960.5L1739 965L1734 969.5" fill="none" stroke-width="1.8"/>
<path d="M1717 975.5H1727" stroke-dasharray="1.8 2" fill="none" stroke-width="1.8"/>
<path d="M1720 992.5V1002H1735V1014M1731 1010L1735 1014.5L1739 1010" fill="none" stroke-width="1.8"/>
<path d="M1717 1014H1727" stroke-dasharray="1.8 2" fill="none" stroke-width="1.8"/>
</g>
<rect x="1708" y="908" width="350" height="30" fill="#000" opacity="0.42" filter="url(#tshadow)"/>
<rect x="1698.2" y="893.2" width="353.8" height="36.5" fill="#666"/>
<rect x="1700" y="893.2" width="350" height="1.8" fill="#b5b5b5"/>
<rect x="1700" y="895" width="350" height="31.2" fill="#fff"/>
<rect x="1702" y="896.1" width="345.8" height="27.8" fill="#fdfad0"/>
<text x="1707" y="917.6" font-family="Liberation Sans" font-size="21.5" fill="#000" stroke="#000" stroke-width="0.3" textLength="333.3" lengthAdjust="spacingAndGlyphs">Line connector[UML Use Case.cdl]</text>
</svg>

<svg class="a" style="left:456px;top:1534px" width="2104" height="66" viewBox="456 1534 2104 66">
<defs>
<linearGradient id="bpause" x1="0" y1="0" x2="1" y2="0"><stop offset="0" stop-color="#ffffff"/><stop offset="0.5" stop-color="#e9e9e9"/><stop offset="1" stop-color="#bdbdbd"/></linearGradient>
<linearGradient id="bcombo" x1="0" y1="0" x2="0" y2="1"><stop offset="0" stop-color="#e6e6e6"/><stop offset="1" stop-color="#fbfbfb"/></linearGradient>
<linearGradient id="bpages" x1="0" y1="0" x2="0" y2="1"><stop offset="0" stop-color="#9c9c9c"/><stop offset="0.5" stop-color="#b9b9b9"/><stop offset="1" stop-color="#a8a8a8"/></linearGradient>
</defs>
<rect x="456" y="1534" width="2104" height="30" fill="#f8f8f8"/>
<rect x="456" y="1534" width="2" height="30" fill="#8e8e8e"/>
<rect x="458" y="1534" width="36" height="30" fill="url(#bpause)"/>
<rect x="458" y="1534" width="35" height="2" fill="#5a5a5a"/>
<rect x="492" y="1534" width="2.2" height="30" fill="#000"/>
<rect x="470" y="1542" width="2" height="14" fill="#666"/><rect x="476" y="1542" width="2" height="14" fill="#666"/>
<rect x="494" y="1534" width="90" height="27" fill="#f7f7f7"/>
<rect x="494" y="1561" width="90" height="2" fill="#b3b3b3"/>
<rect x="537" y="1536" width="1.5" height="25" fill="#ffffff"/>
<path d="M509.5 1546.5L522 1538V1555Z" fill="#bbbbbb"/>
<path d="M571 1546.5L558.5 1538V1555Z" fill="#bbbbbb"/>
<rect x="584" y="1534" width="2" height="30" fill="#a5a5a5"/>
<rect x="586" y="1536" width="188" height="28" fill="url(#bcombo)"/>
<rect x="586" y="1534" width="188" height="2" fill="#a9a9a9"/>
<text x="595" y="1558" font-family="Liberation Sans" font-size="21" fill="#111" stroke="#111" stroke-width="0.3" textLength="120" lengthAdjust="spacingAndGlyphs">Custom 85%</text>
<path d="M752.8 1547L759 1540L765.3 1547M752.8 1554L759 1561.5L765.3 1554" fill="none" stroke="#333" stroke-width="2"/>
<rect x="774" y="1536.5" width="92" height="27" fill="url(#bpages)"/>
<rect x="778.5" y="1538.5" width="1.5" height="23" fill="#555"/><rect x="862" y="1538.5" width="1.5" height="23" fill="#555"/>
<g fill="#fff" stroke="#808080" stroke-width="1.6"><rect x="791" y="1541.5" width="13.5" height="16.5"/><rect x="813" y="1541.5" width="13.5" height="16.5"/><rect x="835" y="1541.5" width="13.5" height="16.5"/></g>
<rect x="866" y="1534" width="1636" height="2" fill="#ffffff"/>
<rect x="923.5" y="1542" width="1518.5" height="16" rx="8" fill="#c1c1c1"/>
<rect x="456" y="1564" width="2104" height="36" fill="#ececec"/>
<rect x="456" y="1564" width="2104" height="2" fill="#d0d0d0"/>
<!-- bottom right icons -->
<rect x="2502" y="1536" width="28" height="26" fill="#c9c9c9" stroke="#a9a9a9" stroke-width="1.5"/>
<rect x="2512" y="1545.5" width="9.5" height="8.5" fill="#dbe9f6" stroke="#6a9ac8" stroke-width="1.6"/>
<path d="M2516.7 1538.5L2519.5 1541.5H2514ZM2516.7 1559.5L2519.5 1556.5H2514ZM2506 1549.5L2509 1546.7V1552.3ZM2527.5 1549.5L2524.5 1546.7V1552.3Z" fill="#2a58b0"/>
<path d="M2506.5 1541V1538.5H2509M2527 1541V1538.5H2524.5M2506.5 1558V1560H2509M2527 1558V1560H2524.5" stroke="#6a8fc8" stroke-width="1.6" fill="none"/>
<rect x="2530" y="1536" width="26" height="26" fill="#c9c9c9" stroke="#a9a9a9" stroke-width="1.5"/>
<rect x="2538" y="1540" width="17" height="19" fill="#dfe8f5"/>
<rect x="2542.5" y="1542.5" width="7" height="13.5" fill="#fff" stroke="#999" stroke-width="1.4"/>
<path d="M2536.5 1542V1539H2539.5M2536.5 1557V1560H2539.5" stroke="#2a58b0" stroke-width="2" fill="none"/>
</svg>
<svg class="a" style="left:2526px;top:62px" width="34" height="1472" viewBox="2526 62 34 1472">
<rect x="2526" y="62" width="34" height="1472" fill="#ececec"/>
<rect x="2526" y="62" width="2" height="1472" fill="#e6e6e6"/>
<rect x="2528" y="62" width="26" height="1472" fill="#fafafa"/>
</svg>
<div class="a" style="left:18px;top:1566px;width:400px;height:30px"></div>
<svg class="a" style="left:0;top:1564px" width="456" height="36" viewBox="0 1564 456 36">
<rect x="0" y="1564" width="456" height="36" fill="#ececec"/>
<rect x="0" y="1564" width="456" height="2" fill="#d0d0d0"/>
</svg>
<svg class="a" style="left:0;top:1564px" width="2560" height="36" viewBox="0 1564 2560 36">
<text x="19.2" y="1586" font-family="Liberation Sans" font-size="23" fill="#111" stroke="#111" stroke-width="0.3" textLength="62.8" lengthAdjust="spacingAndGlyphs">Ready</text>
<text x="1086.8" y="1586" font-family="Liberation Sans" font-size="22.5" fill="#111" stroke="#111" stroke-width="0.3" textLength="215.8" lengthAdjust="spacingAndGlyphs">M: [ 159.66, 94.96 ]</text>
</svg>

</body></html>
